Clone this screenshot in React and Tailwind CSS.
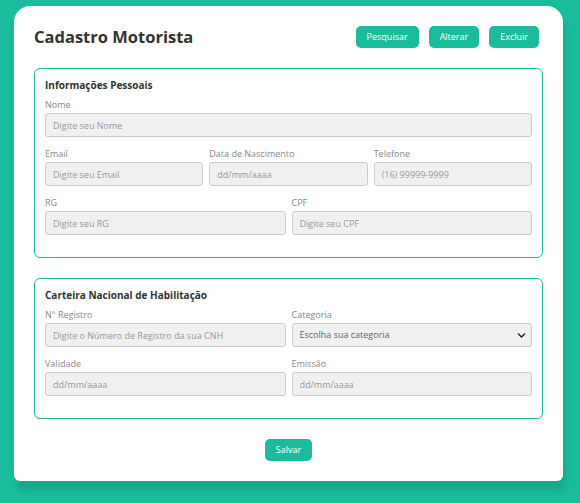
import React from 'react';
import { FaChevronDown } from 'react-icons/fa';

const font = { fontFamily: '"Open Sans", "DejaVu Sans", sans-serif' };

function Field({ label, placeholder, className = '' }) {
  return (
    <div className={`flex flex-col mb-3 ${className}`}>
      <label className="text-[9px] leading-[10px] text-[#888] mb-[3px]">{label}</label>
      <input
        placeholder={placeholder}
        className="block h-6 w-full bg-[#f0f0f0] border border-[#ccc] rounded-[3px] px-[7px] text-[9px] text-[#555] placeholder:text-[#999] outline-none"
      />
    </div>
  );
}

function Section({ title, children }) {
  return (
    <div className="border border-[#1abc9c] rounded-md px-[10px] pt-[10px] pb-[10px]">
      <h2 className="text-[10px] leading-3 font-bold text-[#333] mb-[9px]">{title}</h2>
      {children}
    </div>
  );
}

export default function App() {
  const actions = ['Pesquisar', 'Alterar', 'Excluir'];

  return (
    <div className="min-h-screen bg-[#1abc9c] pt-[6px] pl-[14px] pr-[17px]" style={font}>
      <div className="w-[549px] bg-white rounded-t-2xl rounded-b-[6px] shadow-[3px_10px_6px_rgba(0,0,0,0.1)] px-5 pt-5 pb-5">
        {/* Header */}
        <div className="flex items-center justify-between h-[22px] mb-5">
          <h1 className="text-[16.5px] leading-[22px] font-bold text-[#333]">Cadastro Motorista</h1>
          <div className="flex gap-[10px] mr-[4px]">
            {actions.map((a) => (
              <button
                key={a}
                className="h-[22px] px-[11px] rounded-[5px] bg-[#1abc9c] text-white text-[9px] font-medium"
              >
                {a}
              </button>
            ))}
          </div>
        </div>

        {/* Informações Pessoais */}
        <Section title="Informações Pessoais">
          <Field label="Nome" placeholder="Digite seu Nome" />
          <div className="grid grid-cols-3 gap-x-[6px]">
            <Field label="Email" placeholder="Digite seu Email" />
            <Field label="Data de Nascimento" placeholder="dd/mm/aaaa" />
            <Field label="Telefone" placeholder="(16) 99999-9999" />
          </div>
          <div className="grid grid-cols-2 gap-x-[6px]">
            <Field label="RG" placeholder="Digite seu RG" />
            <Field label="CPF" placeholder="Digite seu CPF" />
          </div>
        </Section>

        <div className="h-5" />

        {/* CNH */}
        <Section title="Carteira Nacional de Habilitação">
          <div className="grid grid-cols-2 gap-x-[6px]">
            <Field label="N° Registro" placeholder="Digite o Número de Registro da sua CNH" />
            <div className="flex flex-col mb-3">
              <label className="text-[9px] leading-[10px] text-[#888] mb-[3px]">Categoria</label>
              <div className="relative h-6">
                <select className="block h-6 w-full appearance-none bg-[#f0f0f0] border border-[#ccc] rounded-[3px] px-[7px] text-[9px] text-[#666] outline-none">
                  <option>Escolha sua categoria</option>
                </select>
                <FaChevronDown className="absolute right-[6px] top-[8px] w-[9px] h-[9px] text-[#222] pointer-events-none" />
              </div>
            </div>
            <Field label="Validade" placeholder="dd/mm/aaaa" />
            <Field label="Emissão" placeholder="dd/mm/aaaa" />
          </div>
        </Section>

        <div className="flex justify-center mt-5">
          <button className="h-[22px] px-[11px] rounded-[5px] bg-[#1abc9c] text-white text-[9px] font-medium">
            Salvar
          </button>
        </div>
      </div>
    </div>
  );
}
